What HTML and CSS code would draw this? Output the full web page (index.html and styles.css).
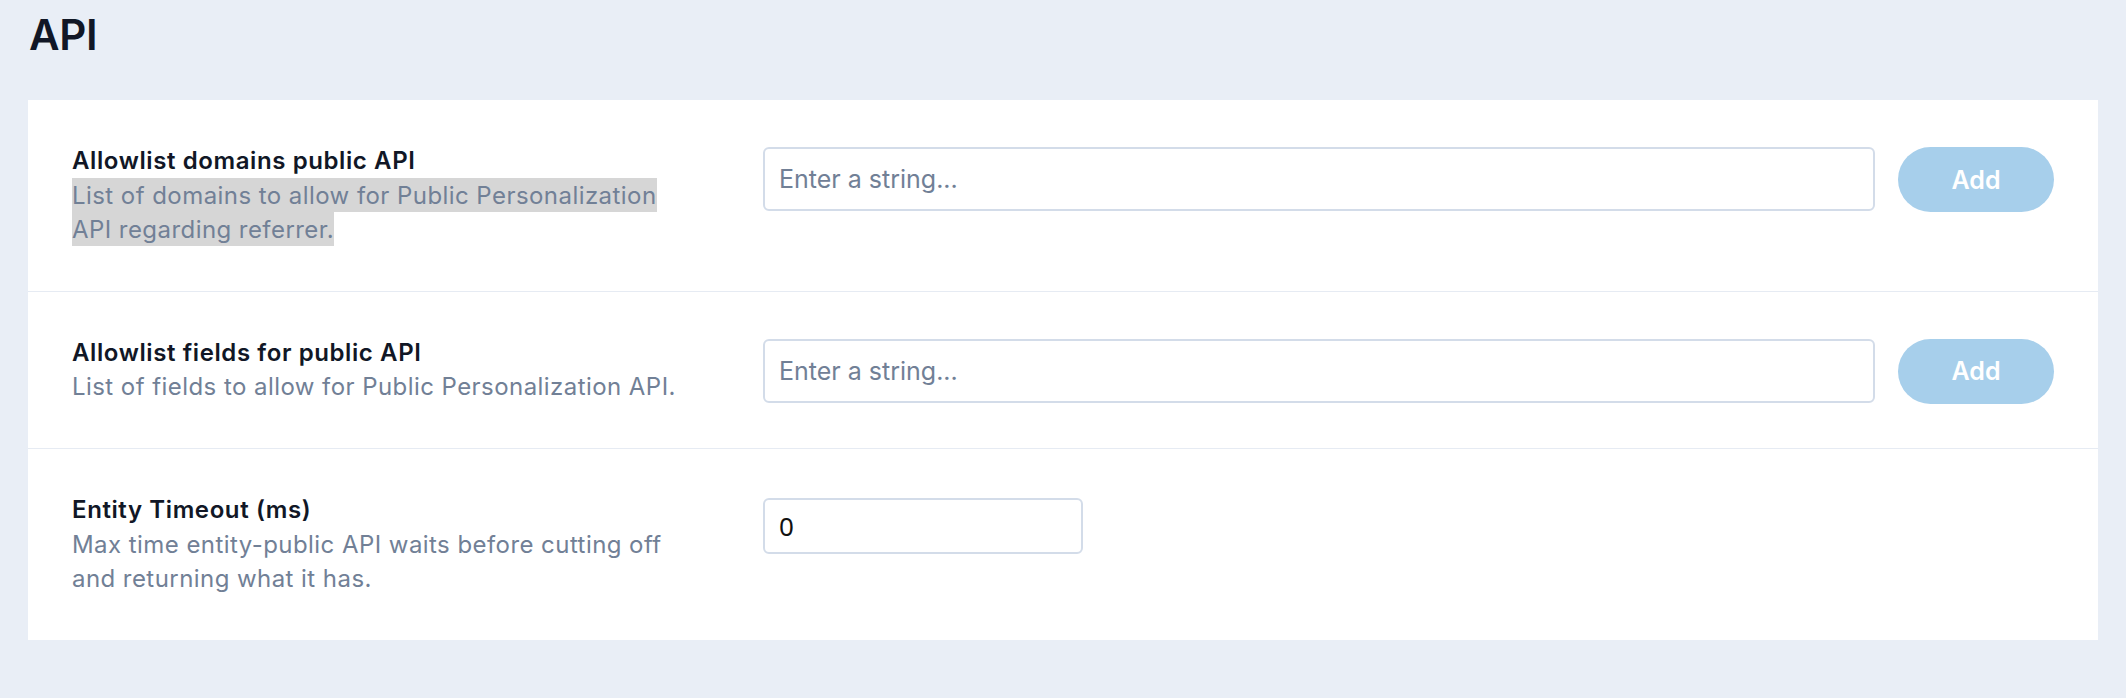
FILE: index.html
```html
<!DOCTYPE html>
<html lang="en">
<head>
<meta charset="utf-8">
<title>API</title>
<link rel="stylesheet" href="styles.css">
</head>
<body>
  <h1 class="page-title">API</h1>
  <section class="card">
    <div class="row">
      <div class="info">
        <div class="label">Allowlist domains public API</div>
        <div class="desc"><span class="selected">List of domains to allow for Public Personalization API regarding referrer.</span></div>
      </div>
      <div class="control">
        <input class="text-input" type="text" placeholder="Enter a string...">
        <button class="add-btn" type="button">Add</button>
      </div>
    </div>
    <div class="row">
      <div class="info">
        <div class="label">Allowlist fields for public API</div>
        <div class="desc">List of fields to allow for Public Personalization API.</div>
      </div>
      <div class="control">
        <input class="text-input" type="text" placeholder="Enter a string...">
        <button class="add-btn" type="button">Add</button>
      </div>
    </div>
    <div class="row">
      <div class="info">
        <div class="label">Entity Timeout (ms)</div>
        <div class="desc">Max time entity-public API waits before cutting off and returning what it has.</div>
      </div>
      <div class="control">
        <input class="num-input" type="text" value="0">
      </div>
    </div>
  </section>
</body>
</html>
```

FILE: styles.css
```css
* {
  box-sizing: border-box;
}

html, body {
  margin: 0;
  padding: 0;
}

body {
  background: #e9eef6;
  padding: 0 28px;
  font-family: Inter, "Noto Sans", "Liberation Sans", sans-serif;
  color: #1a202c;
  height: 698px;
  overflow: hidden;
}

.page-title {
  margin: 0 0 40px 1px;
  padding-top: 9px;
  font-size: 42px;
  line-height: 51px;
  font-weight: 600;
  color: #111726;
  letter-spacing: -0.3px;
}

.card {
  background: #ffffff;
}

.row {
  display: grid;
  grid-template-columns: 625px 1fr;
  column-gap: 66px;
  padding: 44px;
  border-bottom: 1px solid #e6ebf3;
  align-items: start;
}

.row:last-child {
  border-bottom: none;
}

.info {
  font-size: 24px;
  line-height: 34.3px;
}

.label {
  font-weight: 600;
  color: #111726;
  letter-spacing: 0.6px;
}

.desc {
  color: #718096;
  letter-spacing: 0.44px;
}

.selected {
  background: #d6d6d6;
  padding: 2.6px 0;
  -webkit-box-decoration-break: clone;
  box-decoration-break: clone;
}

.control {
  display: flex;
  gap: 23px;
  padding-top: 3px;
  align-items: flex-start;
}

.text-input {
  flex: 1;
  height: 64px;
  border: 2px solid #d3dce9;
  border-radius: 6px;
  padding: 0 14px;
  font-family: Inter, "Noto Sans", sans-serif;
  font-size: 25px;
  color: #1a202c;
  background: #fff;
  outline: none;
}

.text-input::placeholder {
  color: #718096;
  opacity: 1;
}

.num-input {
  width: 320px;
  height: 56px;
  margin-top: 2px;
  border: 2px solid #d3dce9;
  border-radius: 6px;
  padding: 0 14px;
  font-family: "Noto Sans", Inter, sans-serif;
  font-size: 26px;
  color: #111111;
  background: #fff;
  outline: none;
}

.add-btn {
  width: 156px;
  height: 65px;
  border: none;
  border-radius: 999px;
  background: #a7cfeb;
  color: #ffffff;
  font-family: Inter, "Noto Sans", sans-serif;
  font-size: 25px;
  font-weight: 600;
  padding: 0;
}
```
